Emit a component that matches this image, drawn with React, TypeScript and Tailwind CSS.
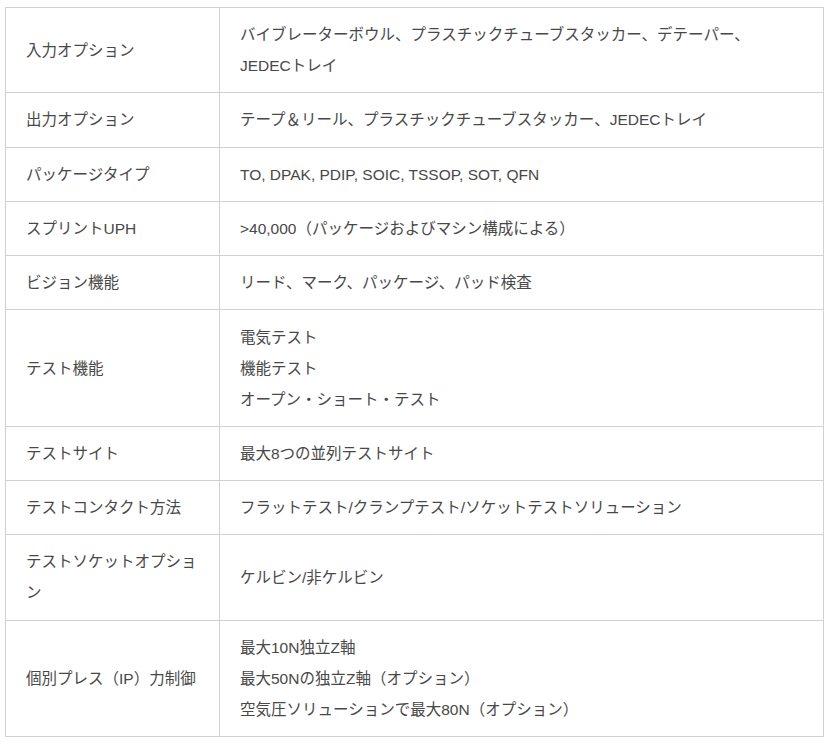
import React from "react";

const rows: { label: React.ReactNode; value: React.ReactNode[] }[] = [
  {
    label: "入力オプション",
    value: [
      <>
        バイブレーターボウル、プラスチックチューブスタッカー、デテーパー、
        <span className="whitespace-nowrap">JEDECトレイ</span>
      </>,
    ],
  },
  { label: "出力オプション", value: ["テープ＆リール、プラスチックチューブスタッカー、JEDECトレイ"] },
  { label: "パッケージタイプ", value: ["TO, DPAK, PDIP, SOIC, TSSOP, SOT, QFN"] },
  { label: "スプリントUPH", value: [">40,000（パッケージおよびマシン構成による）"] },
  { label: "ビジョン機能", value: ["リード、マーク、パッケージ、パッド検査"] },
  { label: "テスト機能", value: ["電気テスト", "機能テスト", "オープン・ショート・テスト"] },
  { label: "テストサイト", value: ["最大8つの並列テストサイト"] },
  { label: "テストコンタクト方法", value: ["フラットテスト/クランプテスト/ソケットテストソリューション"] },
  { label: "テストソケットオプション", value: ["ケルビン/非ケルビン"] },
  {
    label: "個別プレス（IP）力制御",
    value: ["最大10N独立Z軸", "最大50Nの独立Z軸（オプション）", "空気圧ソリューションで最大80N（オプション）"],
  },
];

export default function App() {
  return (
    <div
      className="min-h-[744px] w-[832px] bg-white pl-[5px] pt-[7px] text-[15.5px] leading-[31px] text-[#484848]"
      style={{ fontFamily: '"Liberation Sans", "Noto Sans CJK JP", sans-serif' }}
    >
      <table className="w-[819px] table-fixed border-collapse">
        <colgroup>
          <col className="w-[214px]" />
          <col />
        </colgroup>
        <tbody>
          {rows.map((r, i) => (
            <tr key={i}>
              <td className="border border-[#d0d0d0] px-5 py-[11.15px] align-middle">{r.label}</td>
              <td className="border border-[#d0d0d0] px-5 py-[11.15px] align-middle">
                {r.value.map((v, j) => (
                  <div key={j}>{v}</div>
                ))}
              </td>
            </tr>
          ))}
        </tbody>
      </table>
    </div>
  );
}
